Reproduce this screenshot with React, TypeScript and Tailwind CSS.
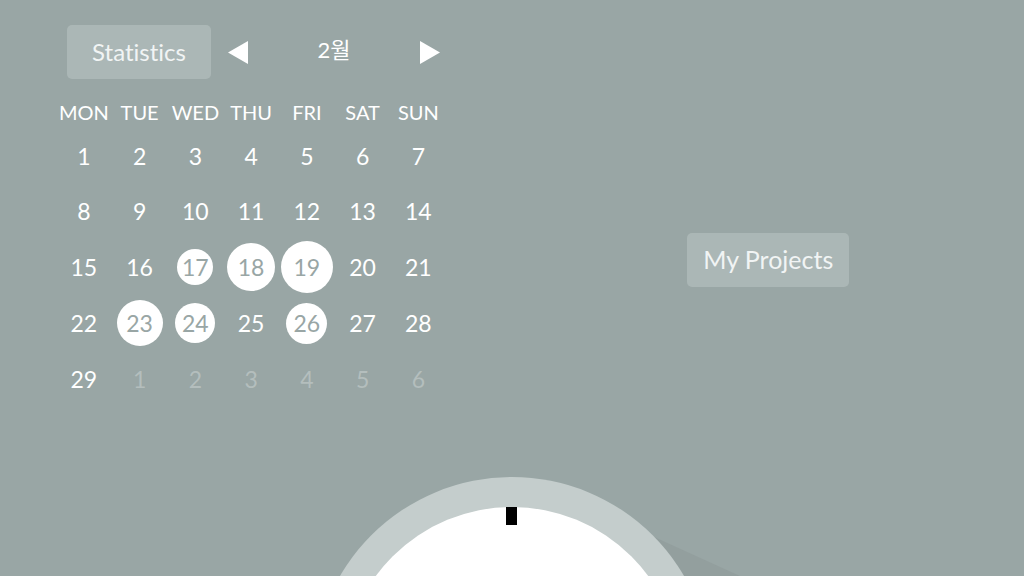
import React from "react";

const font = { fontFamily: '"Lato", "Noto Sans CJK KR", sans-serif' };

type Cell = { n: number; dim?: boolean; circle?: number };

const rows: Cell[][] = [
  [1, 2, 3, 4, 5, 6, 7].map((n) => ({ n })),
  [8, 9, 10, 11, 12, 13, 14].map((n) => ({ n })),
  [
    { n: 15 },
    { n: 16 },
    { n: 17, circle: 36 },
    { n: 18, circle: 48 },
    { n: 19, circle: 52 },
    { n: 20 },
    { n: 21 },
  ],
  [
    { n: 22 },
    { n: 23, circle: 46 },
    { n: 24, circle: 40 },
    { n: 25 },
    { n: 26, circle: 41 },
    { n: 27 },
    { n: 28 },
  ],
  [
    { n: 29 },
    { n: 1, dim: true },
    { n: 2, dim: true },
    { n: 3, dim: true },
    { n: 4, dim: true },
    { n: 5, dim: true },
    { n: 6, dim: true },
  ],
];

const days = ["MON", "TUE", "WED", "THU", "FRI", "SAT", "SUN"];

export default function App() {
  return (
    <div
      className="relative w-[1024px] h-[576px] overflow-hidden bg-[#99a6a5] text-white flex items-start [font-variant-ligatures:none]"
      style={font}
    >
      <div className="pt-[25px] pl-[56px] flex flex-col">
        <div className="flex items-center ml-[11px]">
          <div className="w-[144px] h-[54px] rounded-[5px] bg-[#abb7b6] flex items-center justify-center text-[24px] text-[#f1f4f4] pb-[1px]">
            Statistics
          </div>
          <div className="ml-[17px] w-[20px] h-[54px] flex items-center">
            <svg width="20" height="23" viewBox="0 0 20 23">
              <polygon points="20,0 20,23 0,11.5" fill="#ffffff" />
            </svg>
          </div>
          <div className="w-[172px] flex items-center justify-center text-[22px] pb-[6px]">
            2월
          </div>
          <div className="w-[20px] h-[54px] flex items-center">
            <svg width="20" height="23" viewBox="0 0 20 23">
              <polygon points="0,0 0,23 20,11.5" fill="#ffffff" />
            </svg>
          </div>
        </div>
        <div className="mt-[18px] grid grid-cols-[repeat(7,55.75px)]">
          {days.map((d) => (
            <div
              key={d}
              className="h-[30px] flex items-center justify-center text-[20px]"
            >
              {d}
            </div>
          ))}
          {rows.flat().map((c, i) => (
            <div
              key={i}
              className="h-[55.75px] flex items-center justify-center pt-[2px]"
            >
              {c.circle ? (
                <div
                  className="rounded-full bg-white text-[#99a6a5] flex items-center justify-center text-[23px]"
                  style={{ width: c.circle, height: c.circle }}
                >
                  {c.n}
                </div>
              ) : (
                <span
                  className={
                    "text-[23px] " + (c.dim ? "text-[#b4bebd]" : "text-white")
                  }
                >
                  {c.n}
                </span>
              )}
            </div>
          ))}
        </div>
      </div>
      <div className="mt-[233px] ml-[241px] w-[162px] h-[54px] rounded-[5px] bg-[#abb7b6] flex items-center justify-center text-[25px] text-[#f1f4f4] pb-[1px]">
        My Projects
      </div>
      <svg
        className="absolute left-0 top-0"
        width="1024"
        height="576"
        viewBox="0 0 1024 576"
      >
        <polygon points="652,536 740,576 620,576" fill="#939f9e" />
        <circle cx="512" cy="676" r="199" fill="#c4cdcc" />
        <circle cx="512" cy="676" r="169" fill="#ffffff" />
        <rect x="506" y="507" width="11" height="18" fill="#000000" />
      </svg>
    </div>
  );
}
